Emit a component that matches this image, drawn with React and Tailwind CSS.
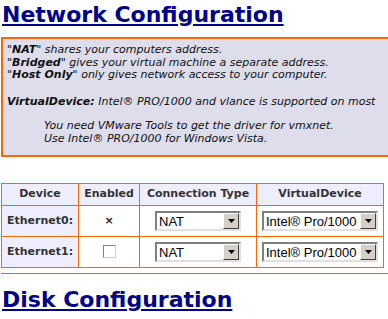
import React from "react";

const FakeSelect = ({ value, width }) => (
  <div
    className={`${width} h-[20px] flex items-center bg-white border-2 border-t-[#808080] border-l-[#808080] border-r-[#e0e0e0] border-b-[#e0e0e0] font-['Liberation_Sans'] text-[13px] text-black`}
  >
    <span className="flex-1 pl-[2px] leading-none whitespace-nowrap">{value}</span>
    <span className="w-[16px] h-[16px] bg-[#d4d0c8] border border-t-white border-l-white border-r-[#404040] border-b-[#404040] flex items-center justify-center">
      <svg width="7" height="4" viewBox="0 0 7 4">
        <path d="M0 0h7L3.5 4z" fill="#000" />
      </svg>
    </span>
  </div>
);

const App = () => {
  const rows = [
    { name: "Ethernet0:", enabled: true },
    { name: "Ethernet1:", enabled: false },
  ];

  return (
    <div className="w-[388px] h-[319px] overflow-hidden bg-white font-['DejaVu_Sans',sans-serif] text-[#222]">
      <h1 className="pl-[2px] pt-[1px] text-[22px] leading-[28px] font-bold text-[#000088] underline">
        Network Configuration
      </h1>

      {/* info box */}
      <div className="mt-[8px] ml-[1px] w-[420px] h-[120px] bg-[#ddddec] border-2 border-[#ff6600] px-[4px] pt-[5px] text-[11px] italic leading-[12.5px] text-[#111]">
        <p>
          "<b>NAT</b>" shares your computers address.
          <br />
          "<b>Bridged</b>" gives your virtual machine a separate address.
          <br />
          "<b>Host Only</b>" only gives network access to your computer.
        </p>
        <p className="mt-[14px]">
          <b>VirtualDevice:</b> Intel® PRO/1000 and vlance is supported on most
        </p>
        <p className="mt-[12px] pl-[37px]">
          You need VMware Tools to get the driver for vmxnet.
          <br />
          Use Intel® PRO/1000 for Windows Vista.
        </p>
      </div>

      {/* device table */}
      <table className="mt-[26px] ml-[1px] w-[383px] border-collapse text-[11px]">
        <thead>
          <tr className="h-[22px] bg-[#eeeeff] text-[#333]">
            <th className="w-[77px] border border-[#ff6600] font-bold">Device</th>
            <th className="w-[61px] border border-[#ff6600] font-bold">Enabled</th>
            <th className="w-[117px] border border-[#ff6600] font-bold">Connection Type</th>
            <th className="border border-[#ff6600] font-bold">VirtualDevice</th>
          </tr>
        </thead>
        <tbody>
          {rows.map((r) => (
            <tr key={r.name} className="h-[31px]">
              <td className="border border-[#ff6600] bg-[#eeeeff] text-center font-bold text-[#333]">
                {r.name}
              </td>
              <td className="border border-[#ff6600] text-center font-bold">
                {r.enabled ? (
                  "×"
                ) : (
                  <span className="inline-block align-middle w-[13px] h-[13px] bg-white border border-t-[#808080] border-l-[#808080] border-r-[#d4d0c8] border-b-[#d4d0c8]" />
                )}
              </td>
              <td className="border border-[#ff6600]">
                <div className="flex justify-center">
                  <FakeSelect value="NAT" width="w-[86px]" />
                </div>
              </td>
              <td className="border border-[#ff6600]">
                <div className="flex justify-center">
                  <FakeSelect value="Intel® Pro/1000" width="w-[116px]" />
                </div>
              </td>
            </tr>
          ))}
        </tbody>
      </table>

      <hr className="mt-[5px] ml-[1px] border-0 border-t border-[#ff6600]" />

      <h1 className="mt-[12px] pl-[2px] text-[22px] leading-[28px] font-bold text-[#000088] underline">
        Disk Configuration
      </h1>
    </div>
  );
};

export default App;
